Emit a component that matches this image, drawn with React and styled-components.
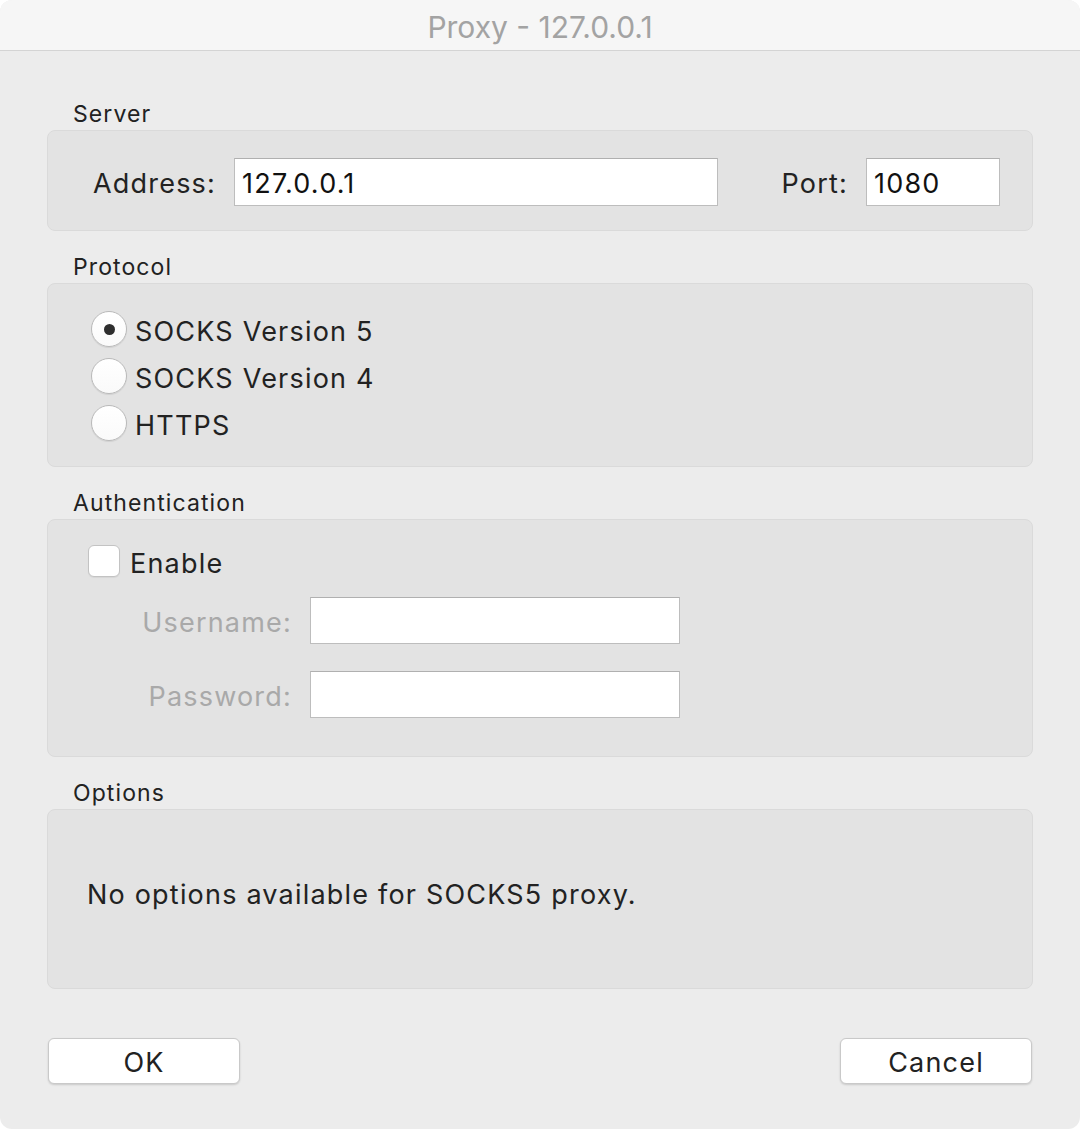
import React from "react";
import styled, { createGlobalStyle } from "styled-components";

const Global = createGlobalStyle`
  html, body { margin: 0; padding: 0; background: #ffffff; }
  body { font-family: Inter, "Noto Sans", sans-serif; color: #222222; }
  * { box-sizing: border-box; }
`;

const Window = styled.div`
  width: 1080px;
  height: 1129px;
  background: #ececec;
  border-radius: 12px;
  overflow: hidden;
  display: flex;
  flex-direction: column;
`;

const TitleBar = styled.div`
  height: 51px;
  flex: none;
  background: #f6f6f6;
  border-bottom: 1px solid #d4d4d4;
  display: flex;
  align-items: center;
  justify-content: center;
  padding-top: 3px;
  font-size: 30px;
  color: #a3a3a3;
`;

const Content = styled.div`
  flex: 1;
  padding: 50px 47px 0 47px;
  display: flex;
  flex-direction: column;
`;

const Section = styled.section`
  display: flex;
  flex-direction: column;
  margin-bottom: 23px;
`;

const SectionLabel = styled.div`
  font-size: 23px;
  letter-spacing: 1.1px;
  line-height: 26px;
  padding-left: 26px;
  margin-bottom: 3px;
  color: #222222;
`;

const Panel = styled.div`
  background: #e3e3e3;
  border: 1px solid #dadada;
  border-radius: 8px;
  height: ${(p) => p.$h}px;
  font-size: 27px;
  letter-spacing: 1.2px;
`;

const ServerRow = styled(Panel)`
  display: flex;
  align-items: center;
  padding: 2px 32px 0 45px;
`;

const FieldLabel = styled.span`
  color: ${(p) => (p.$disabled ? "#a9a9a9" : "#222222")};
  white-space: nowrap;
  position: relative;
  top: 2px;
`;

const TextBox = styled.div`
  width: ${(p) => p.$w}px;
  height: ${(p) => p.$hh || 48}px;
  background: #ffffff;
  border: 1px solid #bdbdbd;
  border-top-color: #b0b0b0;
  display: flex;
  align-items: center;
  padding: 3px 0 0 7px;
  color: #111111;
  margin-left: ${(p) => p.$ml || 0}px;
`;

const Spacer = styled.div`
  flex: 1;
`;

const RadioList = styled(Panel)`
  display: flex;
  flex-direction: column;
  gap: 11px;
  padding: 27px 0 0 43px;
`;

const RadioRow = styled.div`
  display: flex;
  align-items: center;
  gap: 8px;
  height: 36px;
`;

const RadioText = styled.span`
  position: relative;
  top: 2px;
`;

const RadioCircle = styled.span`
  width: 36px;
  height: 36px;
  border-radius: 50%;
  background: linear-gradient(#ffffff, #fafafa);
  border: 1px solid #bababa;
  box-shadow: 0 1px 1px rgba(0, 0, 0, 0.08);
  display: flex;
  align-items: center;
  justify-content: center;
  flex: none;
  &::after {
    content: "";
    width: 11px;
    height: 11px;
    border-radius: 50%;
    background: ${(p) => (p.$checked ? "#2e2e2e" : "transparent")};
  }
`;

const AuthPanel = styled(Panel)`
  padding: 24px 0 0 40px;
  display: flex;
  flex-direction: column;
`;

const CheckRow = styled.div`
  display: flex;
  align-items: center;
  gap: 10px;
  height: 34px;
`;

const CheckBox = styled.span`
  width: 32px;
  height: 32px;
  border-radius: 6px;
  background: #ffffff;
  border: 1px solid #c3c3c3;
  box-shadow: 0 1px 1px rgba(0, 0, 0, 0.06);
  flex: none;
`;

const CredGrid = styled.div`
  display: grid;
  grid-template-columns: 204px 370px;
  column-gap: 18px;
  row-gap: 27px;
  align-items: center;
  margin-top: 19px;
`;

const RightLabel = styled(FieldLabel)`
  text-align: right;
`;

const OptionsPanel = styled(Panel)`
  display: flex;
  align-items: center;
  padding: 0 0 10px 39px;
`;

const ButtonBar = styled.div`
  display: flex;
  justify-content: space-between;
  margin-top: 26px;
  padding: 0 1px;
`;

const Button = styled.button`
  width: 192px;
  height: 46px;
  background: #ffffff;
  border: 1px solid #c9c9c9;
  border-radius: 6px;
  box-shadow: 0 1px 2px rgba(0, 0, 0, 0.15);
  font-family: Inter, "Noto Sans", sans-serif;
  font-size: 27px;
  letter-spacing: 1.2px;
  color: #222222;
  padding: 3px 0 0 0;
`;

export default function App() {
  return (
    <>
      <Global />
      <Window>
        <TitleBar>Proxy - 127.0.0.1</TitleBar>
        <Content>
          <Section>
            <SectionLabel>Server</SectionLabel>
            <ServerRow $h={101}>
              <FieldLabel>Address:</FieldLabel>
              <TextBox $w={484} $ml={18}>127.0.0.1</TextBox>
              <Spacer />
              <FieldLabel>Port:</FieldLabel>
              <TextBox $w={134} $ml={18}>1080</TextBox>
            </ServerRow>
          </Section>
          <Section>
            <SectionLabel>Protocol</SectionLabel>
            <RadioList $h={184}>
              <RadioRow>
                <RadioCircle $checked />
                <RadioText>SOCKS Version 5</RadioText>
              </RadioRow>
              <RadioRow>
                <RadioCircle />
                <RadioText>SOCKS Version 4</RadioText>
              </RadioRow>
              <RadioRow>
                <RadioCircle />
                <RadioText>HTTPS</RadioText>
              </RadioRow>
            </RadioList>
          </Section>
          <Section>
            <SectionLabel>Authentication</SectionLabel>
            <AuthPanel $h={238}>
              <CheckRow>
                <CheckBox />
                <RadioText>Enable</RadioText>
              </CheckRow>
              <CredGrid>
                <RightLabel $disabled>Username:</RightLabel>
                <TextBox $w={370} $hh={47} />
                <RightLabel $disabled>Password:</RightLabel>
                <TextBox $w={370} $hh={47} />
              </CredGrid>
            </AuthPanel>
          </Section>
          <Section>
            <SectionLabel>Options</SectionLabel>
            <OptionsPanel $h={180}>No options available for SOCKS5 proxy.</OptionsPanel>
          </Section>
          <ButtonBar>
            <Button>OK</Button>
            <Button>Cancel</Button>
          </ButtonBar>
        </Content>
      </Window>
    </>
  );
}
